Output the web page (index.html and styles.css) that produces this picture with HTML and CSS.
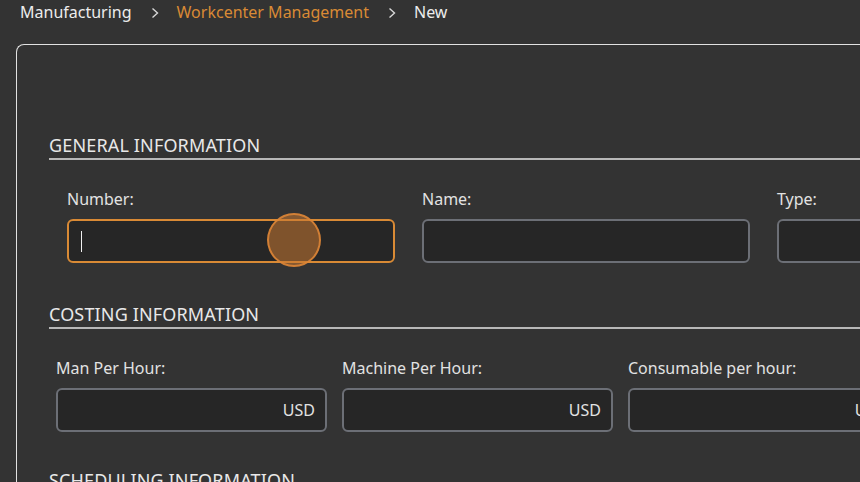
FILE: index.html
```
<!DOCTYPE html>
<html>
<head>
<meta charset="utf-8">
<link rel="stylesheet" href="styles.css">
</head>
<body>
<nav class="breadcrumb">
  <span class="crumb">Manufacturing</span>
  <svg class="sep" width="8" height="12" viewBox="0 0 8 12"><path d="M1.5 1.5 L6.5 6 L1.5 10.5" fill="none" stroke="#d8d8d8" stroke-width="1.4"/></svg>
  <span class="crumb active">Workcenter Management</span>
  <svg class="sep" width="8" height="12" viewBox="0 0 8 12"><path d="M1.5 1.5 L6.5 6 L1.5 10.5" fill="none" stroke="#d8d8d8" stroke-width="1.4"/></svg>
  <span class="crumb">New</span>
</nav>
<main class="card">
  <section class="section first">
    <h2 class="heading">GENERAL INFORMATION</h2>
    <div class="row row-general">
      <div class="field">
        <label class="label">Number:</label>
        <div class="input focused"><span class="caret"></span><span class="click"></span></div>
      </div>
      <div class="field">
        <label class="label">Name:</label>
        <div class="input"></div>
      </div>
      <div class="field">
        <label class="label">Type:</label>
        <div class="input"></div>
      </div>
    </div>
  </section>
  <section class="section">
    <h2 class="heading">COSTING INFORMATION</h2>
    <div class="row row-costing">
      <div class="field">
        <label class="label">Man Per Hour:</label>
        <div class="input suffix"><span class="unit">USD</span></div>
      </div>
      <div class="field">
        <label class="label">Machine Per Hour:</label>
        <div class="input suffix"><span class="unit">USD</span></div>
      </div>
      <div class="field">
        <label class="label">Consumable per hour:</label>
        <div class="input suffix"><span class="unit">USD</span></div>
      </div>
    </div>
  </section>
  <section class="section">
    <h2 class="heading">SCHEDULING INFORMATION</h2>
  </section>
</main>
</body>
</html>
```
FILE: styles.css
```
html, body {
  margin: 0;
  padding: 0;
  background: #333333;
  overflow: hidden;
  height: 100%;
}
body {
  font-family: "Noto Sans", "Open Sans", sans-serif;
  color: #e6e6e6;
}
.breadcrumb {
  display: flex;
  align-items: center;
  height: 24px;
  padding-left: 20px;
  font-size: 16px;
  line-height: 24px;
  white-space: nowrap;
}
.crumb { color: #ececec; }
.crumb.active { color: #d98a35; }
.sep {
  display: block;
  flex: none;
  margin: 1px 18px 0 19px;
}
.card {
  margin-top: 20px;
  margin-left: 16px;
  border: 1px solid #e2e2e2;
  border-right: none;
  border-bottom: none;
  border-radius: 8px 0 0 0;
  padding: 0 0 0 32px;
  height: 600px;
  box-sizing: border-box;
}
.section.first { padding-top: 90px; }
.section { padding-top: 41px; }
.section:last-child { padding-top: 38px; }
.heading {
  margin: 0;
  font-weight: 400;
  font-size: 18px;
  line-height: 21px;
  color: #e8e8e8;
  padding-bottom: 2px;
  border-bottom: 2px solid #b8b8b8;
  letter-spacing: 0.15px;
  white-space: nowrap;
}
.row {
  display: flex;
  margin-top: 29px;
  white-space: nowrap;
}
.row-general { padding-left: 18px; gap: 27px; }
.row-general .field { width: 328px; flex: none; }
.row-costing { padding-left: 7px; gap: 15px; }
.row-costing .field { width: 271px; flex: none; }
.label {
  display: block;
  font-size: 16px;
  line-height: 20px;
  color: #e2e2e2;
  margin-bottom: 10px;
}
.input {
  position: relative;
  height: 44px;
  box-sizing: border-box;
  background: #262626;
  border: 2px solid #6c6f76;
  border-radius: 6px;
  display: flex;
  align-items: center;
}
.input.focused { border-color: #d98a35; }
.input.suffix { justify-content: flex-end; padding-right: 10px; }
.unit {
  font-size: 16px;
  color: #e2e2e2;
}
.caret {
  display: block;
  width: 1px;
  height: 21px;
  background: #f0f0f0;
  margin-left: 12px;
}
.click {
  position: absolute;
  left: 198px;
  top: -8px;
  width: 54px;
  height: 54px;
  box-sizing: border-box;
  border-radius: 50%;
  background: rgba(200, 120, 50, 0.55);
  border: 2px solid rgba(225, 135, 55, 0.85);
}
```
